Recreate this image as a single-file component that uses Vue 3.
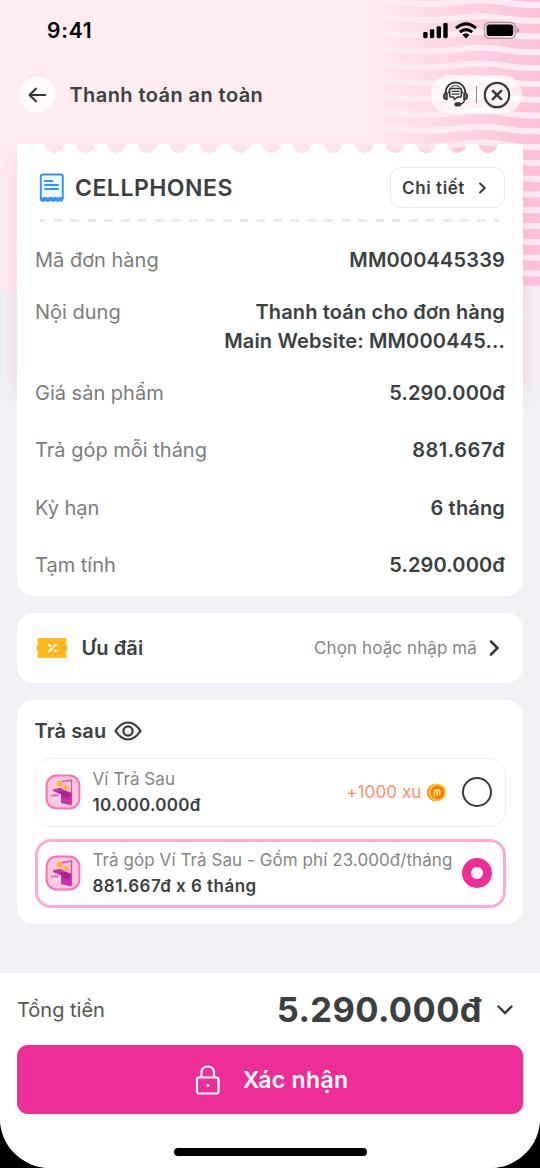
<script setup>
const rows = [
  { label: 'Mã đơn hàng', lines: ['MM000445339'] },
  { label: 'Nội dung', lines: ['Thanh toán cho đơn hàng', 'Main Website: MM000445...'] },
  { label: 'Giá sản phẩm', lines: ['5.290.000đ'] },
  { label: 'Trả góp mỗi tháng', lines: ['881.667đ'] },
  { label: 'Kỳ hạn', lines: ['6 tháng'] },
  { label: 'Tạm tính', lines: ['5.290.000đ'] },
]
const options = [
  { title: 'Ví Trả Sau', amount: '10.000.000đ', bonus: '+1000 xu', selected: false },
  { title: 'Trả góp Ví Trả Sau - Gồm phí 23.000đ/tháng', amount: '881.667đ x 6 tháng', selected: true },
]
const waves = Array.from({ length: 20 }, (_, i) => {
  const y = -3 + i * 15.8
  return `M350 ${y - 5}C380 ${y - 4} 410 ${y + 0.5} 437 ${y - 1}S465 ${y - 5} 485 ${y - 4.5}S510 ${y} 530 ${y}L545 ${y}`
})
</script>

<template>
  <div class="device">
    <div class="screen">
      <div class="hero">
        <svg width="540" height="294" viewBox="0 0 540 294">
          <defs>
            <linearGradient id="fade" gradientUnits="userSpaceOnUse" x1="365" y1="0" x2="540" y2="0">
              <stop offset="0" stop-color="#ffbdd6" stop-opacity="0" />
              <stop offset=".5" stop-color="#ffbdd6" stop-opacity=".5" />
              <stop offset="1" stop-color="#febbd4" stop-opacity=".88" />
            </linearGradient>
          </defs>
          <path v-for="d in waves" :key="d" :d="d" fill="none" stroke="url(#fade)" stroke-width="9.8" />
        </svg>
      </div>

      <header class="status">
        <span class="time">9:41</span>
        <svg width="100" height="20" viewBox="0 0 100 20">
          <rect x="1.200" y="12" width="4.400" height="6.200" rx="1.400" />
          <rect x="7.900" y="9.300" width="4.400" height="8.900" rx="1.400" />
          <rect x="14.600" y="6.300" width="4.400" height="11.900" rx="1.400" />
          <rect x="21.300" y="3" width="4.400" height="15.200" rx="1.400" />
          <g fill="none" stroke="#000" stroke-width="3">
            <path d="M34 8.200Q44 -.5 54 8.200" />
            <path d="M37.800 12.200Q44 7 50.200 12.200" />
          </g>
          <path d="M40.400 14.800Q44 11.800 47.600 14.800L44 18.400Z" />
          <rect x="62.400" y="2.300" width="31" height="16" rx="4.800" fill="none" stroke="#8e8287" stroke-opacity=".75" stroke-width="1.300" />
          <rect x="64.600" y="4.500" width="26.600" height="11.600" rx="2.800" />
          <path d="M94.800 7.300q2.400.8 2.400 3t-2.400 3z" fill="#a1969b" />
        </svg>
      </header>

      <nav class="nav">
        <span class="back">
          <svg width="20" height="20" viewBox="0 0 20 20"><path d="M17.200 10H1.700M7.900 3.700L1.500 10L7.900 16.300" fill="none" stroke="#34373a" stroke-width="2.100" stroke-linecap="round" stroke-linejoin="round" /></svg>
        </span>
        <h1>Thanh toán an toàn</h1>
        <div class="pill">
          <svg width="28" height="28" viewBox="0 0 28 28" fill="none" stroke="#34393b" stroke-width="1.8" stroke-linecap="round" stroke-linejoin="round">
            <path d="M3.600 12C3.800 -2 23 -2 23.400 12" />
            <path d="M6.500 12C7 2 20 2 20.500 12" stroke-width="1" />
            <path d="M5 12v6.500C.6 18.500.6 12 5 12zM22 12v6.500C26.400 18.500 26.400 12 22 12z" fill="#6c7072" stroke-width="1.500" />
            <path d="M9.500 7.500h8q1.800 0 1.800 1.800v5q0 1.800-1.800 1.800H15.500l-3 2.400-1-2.400H9.500Q7.700 16.100 7.700 14.300v-5Q7.700 7.500 9.500 7.500z" stroke-width="1.500" />
            <path d="M10 10.300h7M10 13.100h7" stroke-width="1.200" />
            <path d="M22.500 19q-.4 3.500-4.500 4.200" stroke-width="1.500" />
            <rect x="13.200" y="22.200" width="5.200" height="2.500" rx="1.250" fill="#34393b" />
          </svg>
          <i class="divider"></i>
          <svg width="28" height="28" viewBox="0 0 28 28" fill="none" stroke="#34393b" stroke-width="2.2" stroke-linecap="round"><circle cx="14" cy="14" r="12.200" /><path d="M9.800 9.800l8.400 8.400M18.200 9.800l-8.400 8.400" stroke-width="2.500" /></svg>
        </div>
      </nav>

      <main>
        <section class="ticket">
          <div class="edge"><div class="scallop"></div></div>
          <div class="ticket-body">
            <div class="merchant">
              <svg width="26" height="30" viewBox="0 0 26 30">
                <path d="M3.800 1.500h18q2 0 2 2v22H1.800v-22q0-2 2-2z" fill="#eff9ff" stroke="#2f92ff" stroke-width="1.900" />
                <path d="M.8 23.500l2.600 1.800 2.600-1.600 2.600 1.600 2.700-1.600 2.600 1.600 2.600-1.600 2.600 1.600 2.600-1.600 2.100 1.300v4l-2.300-1-2.500 1-2.500-1-2.500 1-2.500-1-2.500 1-2.500-1-2.500 1-2.700-1z" fill="#2f92ff" />
                <path d="M6 8h7.500M6 12h13M6 16h13" stroke="#2f92ff" stroke-width="1.900" stroke-linecap="round" />
              </svg>
              <h2>CELLPHONES</h2>
              <span class="detail">Chi tiết
                <svg width="9" height="12" viewBox="0 0 9 12"><path d="M2 1.500L6.800 6L2 10.500" fill="none" stroke="#34373a" stroke-width="1.900" stroke-linecap="round" stroke-linejoin="round" /></svg>
              </span>
            </div>
            <svg class="dash" width="461" height="3" viewBox="0 0 461 3"><path d="M1 1.500H460" stroke="#e7e7e7" stroke-width="2.600" stroke-dasharray="8.500 8.440" stroke-dashoffset="3.500" /></svg>
            <dl>
              <div v-for="(r, i) in rows" :key="i" class="row" :class="'row' + i">
                <dt>{{ r.label }}</dt>
                <dd><span v-for="l in r.lines" :key="l">{{ l }}</span></dd>
              </div>
            </dl>
          </div>
        </section>

        <section class="card promo">
          <svg width="32" height="22" viewBox="0 0 32 22">
            <path d="M2.500 1h27q1 0 1 1v3q-1.300.8-.2 2.200.9 1 .9 1.800v4q0 .8-.9 1.800-1.100 1.400.2 2.200v3q0 1-1 1H2.500q-1 0-1-1v-3q1.300-.8.2-2.200-.9-1-.9-1.800V9q0-.8.9-1.800Q2.800 5.800 1.500 5V2q0-1 1-1z" fill="#ffb71f" />
            <path d="M12.800 14.500l7-7" stroke="#fff" stroke-width="1.900" stroke-linecap="round" />
            <circle cx="13.500" cy="8.200" r="1.500" fill="#fff" /><circle cx="19.200" cy="14" r="1.500" fill="#fff" />
          </svg>
          <h3>Ưu đãi</h3>
          <span class="hint">Chọn hoặc nhập mã</span>
          <svg width="12" height="18" viewBox="0 0 12 18"><path d="M2 2.500L8.500 9L2 15.500" fill="none" stroke="#34373a" stroke-width="2.500" stroke-linecap="round" /></svg>
        </section>

        <section class="card later">
          <div class="later-head">
            <h3>Trả sau</h3>
            <svg width="28" height="20" viewBox="0 0 28 20" fill="none" stroke="#34393b" stroke-width="2.200"><path d="M1.500 10Q7 1.500 14 1.500T26.500 10Q21 18.500 14 18.500T1.500 10z" stroke-linejoin="round" /><circle cx="14" cy="10" r="4.600" /></svg>
          </div>
          <div v-for="(o, i) in options" :key="i" class="option" :class="{ selected: o.selected }">
            <svg class="wallet" width="36" height="36" viewBox="0 0 36 36">
              <rect x="1.600" y="1.600" width="32.800" height="32.800" rx="10" fill="#fdc8df" stroke="#fa70b5" stroke-width="2" />
              <path d="M5 22L15 7h10v22h-7z" fill="#ffdbe4" />
              <path d="M16 8l9.500-2v25l-9-1z" fill="#f9c0d8" />
              <path d="M17 7.500l9.500-1.500v24" fill="none" stroke="#d653b5" stroke-width="1.400" />
              <circle cx="14.500" cy="9.800" r="3" fill="#ffb42f" /><circle cx="21" cy="13.500" r="2.600" fill="#ffb42f" />
              <path d="M8 15.500q4-2 8-1.500l4 2.500 6.500 2V31.500l-10.500-2.500v-8.500L8 17z" fill="#c634a5" />
              <path d="M14 17.500l7-.5 5.500 4-4.500 3.500-5-3z" fill="#a62590" />
              <path d="M5.500 21l5.500-1.500 3.500 1-2 2.200H6z" fill="#e67acb" />
            </svg>
            <div class="option-text">
              <span class="option-title">{{ o.title }}</span>
              <strong>{{ o.amount }}</strong>
            </div>
            <span v-if="o.bonus" class="bonus">{{ o.bonus }}
              <svg width="21" height="21" viewBox="0 0 22 22"><circle cx="10.200" cy="11" r="9.200" fill="#ef8b0b" /><circle cx="11.800" cy="10.800" r="9.200" fill="#ffc62e" /><circle cx="12" cy="10.800" r="7.200" fill="#f07f09" /><path d="M8.500 14.500l.5-5q1.600-2 2.500 0v4M11.500 9.500q2-2 3 0l-.3 4" fill="none" stroke="#ffe07a" stroke-width="1.700" stroke-linecap="round" /></svg>
            </span>
            <i class="radio"></i>
          </div>
        </section>
      </main>

      <footer>
        <div class="total">
          <span class="total-label">Tổng tiền</span>
          <strong>5.290.000đ</strong>
          <svg width="18" height="12" viewBox="0 0 18 12"><path d="M2.500 2.500L9 9L15.500 2.500" fill="none" stroke="#34373a" stroke-width="2.300" stroke-linecap="round" /></svg>
        </div>
        <button class="confirm">
          <svg width="26" height="30" viewBox="0 0 26 30" fill="none" stroke="#fff" stroke-width="2.200"><rect x="2" y="12.500" width="21.500" height="16" rx="2" /><path d="M6.500 12.500V8Q6.500 1.500 12.700 1.500T19 8v4.500" /><circle cx="12.800" cy="20.500" r="1.500" fill="#fff" stroke="none" /></svg>
          <span>Xác nhận</span>
        </button>
        <div class="home"></div>
      </footer>
    </div>
  </div>
</template>

<style>
body { margin: 0; background: #000; }
</style>

<style scoped>
* { box-sizing: border-box; }
h1, h2, h3, dl, dd { margin: 0; }
svg { display: block; flex: none; }
.device { width: 540px; height: 1168px; background: #000; font-family: Inter, "Liberation Sans", sans-serif; color: #3c3f41; white-space: nowrap; }
.screen { position: relative; height: 1168px; overflow: hidden; background: #f0f0f5; border-radius: 0 0 50px 50px; display: flex; flex-direction: column; }
.hero { position: absolute; inset: 0 0 auto; height: 294px; background: #ffecf2; -webkit-mask: linear-gradient(#000 283px, transparent 294px); mask: linear-gradient(#000 283px, transparent 294px); }
.status { position: relative; height: 75px; padding: 20px 18px 0 47px; display: flex; justify-content: space-between; align-items: flex-start; }
.time { font-size: 21px; line-height: 21px; font-weight: 600; color: #000; letter-spacing: .8px; }
.nav { position: relative; height: 69px; padding: 0 18px; display: flex; align-items: flex-start; }
.back { width: 39px; height: 39px; border-radius: 50%; background: #fffafc; border: 1px solid #f7e7ed; display: grid; place-items: center; }
h1 { margin-left: 12.500px; font-size: 20px; line-height: 41px; font-weight: 600; letter-spacing: .42px; }
.pill { margin-left: auto; width: 92px; height: 39px; border-radius: 20px; border: 1px solid #f8e5ec80; background: #ffffffb8; display: flex; align-items: center; padding-left: 11px; }
.divider { width: 1px; height: 17px; margin: 0 6px; background: #8e898c; }
main { position: relative; flex: 1; padding: 0 17px; }
.ticket { position: relative; height: 452px; display: flex; flex-direction: column; }
.ticket::before { content: ""; position: absolute; inset: 12px 2px auto; height: 235px; box-shadow: 0 0 18px 2px #fb8fb850; }
.edge { position: relative; flex: none; height: 9px; display: flex; }
.edge::before, .edge::after { content: ""; background: #fff; }
.edge::before { width: 22px; border-radius: 2px 0 0 0; }
.edge::after { flex: 1; border-radius: 0 2px 0 0; }
.scallop { flex: none; width: 464.500px; background: #fff; -webkit-mask: radial-gradient(circle at 15.500px -1px, transparent 9.500px, #000 10px) 0 0 / 30.970px 9px repeat-x; mask: radial-gradient(circle at 15.500px -1px, transparent 9.500px, #000 10px) 0 0 / 30.970px 9px repeat-x; }
.ticket-body { position: relative; flex: 1; min-height: 0; background: #fff; border-radius: 0 0 17px 17px; padding: 14px 18px 0; }
.merchant { height: 41px; display: flex; align-items: center; padding-left: 4px; }
h2 { margin-left: 10px; font-size: 23px; font-weight: 600; letter-spacing: .5px; }
.detail { margin-left: auto; width: 115px; height: 41px; border: 1.500px solid #e9e9e9; border-radius: 11px; display: flex; align-items: center; gap: 13px; padding-left: 11px; font-size: 17px; font-weight: 600; letter-spacing: .6px; }
.dash { margin: 11px 0 0 4px; }
dl { padding-top: 23.500px; }
.row { display: flex; justify-content: space-between; margin-bottom: 28.500px; font-size: 20px; line-height: 29px; }
.row0, .row1 { margin-bottom: 23px; }
.row5 { margin-bottom: 0; }
dt { color: #7c7c7c; }
dd { display: flex; flex-direction: column; align-items: flex-end; font-weight: 600; letter-spacing: .16px; }
.row3 dd { letter-spacing: .55px; }
.card { background: #fff; border-radius: 17px; margin-top: 17px; }
.promo { height: 69.500px; padding: 0 22px 0 19px; display: flex; align-items: center; }
h3 { font-size: 20px; line-height: 28px; font-weight: 600; letter-spacing: .1px; }
.promo h3 { margin-left: 13.500px; }
.hint { margin-left: auto; margin-right: 12px; font-size: 17px; letter-spacing: .1px; color: #858585; }
.later { height: 224.500px; padding: 17.500px 17.500px 0; }
.later-head { height: 40.500px; display: flex; align-items: flex-start; gap: 8px; }
.later-head svg { margin-top: 3.500px; }
.option { height: 69px; border: 1px solid #f0f0f0; border-radius: 16px; display: flex; align-items: center; padding: 0 13px 0 9.500px; margin-bottom: 12px; }
.option.selected { border: 3px solid #fbabd6; padding: 0 11px 0 7.500px; }
.option-text { margin-left: 11.500px; display: flex; flex-direction: column; line-height: 26px; }
.option-title { font-size: 17px; letter-spacing: .07px; color: #858585; }
.option strong { font-size: 17px; font-weight: 600; letter-spacing: .25px; }
.option.selected strong { letter-spacing: .46px; }
.bonus { margin-left: auto; margin-right: 15px; display: flex; align-items: center; gap: 4px; color: #ff8f6f; font-size: 17px; letter-spacing: .1px; }
.radio { width: 30px; height: 30px; flex: none; border: 2.600px solid #34393b; border-radius: 50%; }
.selected .radio { margin-left: auto; border: 9px solid #ed2e96; }
footer { position: relative; height: 195px; background: #fff; padding: 0 17px; }
.total { height: 73px; display: flex; align-items: center; margin-bottom: -1px; }
.total-label { font-size: 20px; color: #555; }
.total strong { margin-left: auto; font-size: 34.500px; font-weight: 700; letter-spacing: .4px; }
.total svg { margin: 0 9px 0 14px; }
.confirm { width: 100%; height: 69px; border: 0; border-radius: 11px; background: #ed2e96; color: #fff; font: 600 23px Inter, sans-serif; letter-spacing: .32px; display: flex; align-items: center; justify-content: center; gap: 22px; padding: 1px 0 0 3px; }
.home { width: 193px; height: 8px; border-radius: 4px; background: #000; margin: 34px 0 0 157px; }
</style>
